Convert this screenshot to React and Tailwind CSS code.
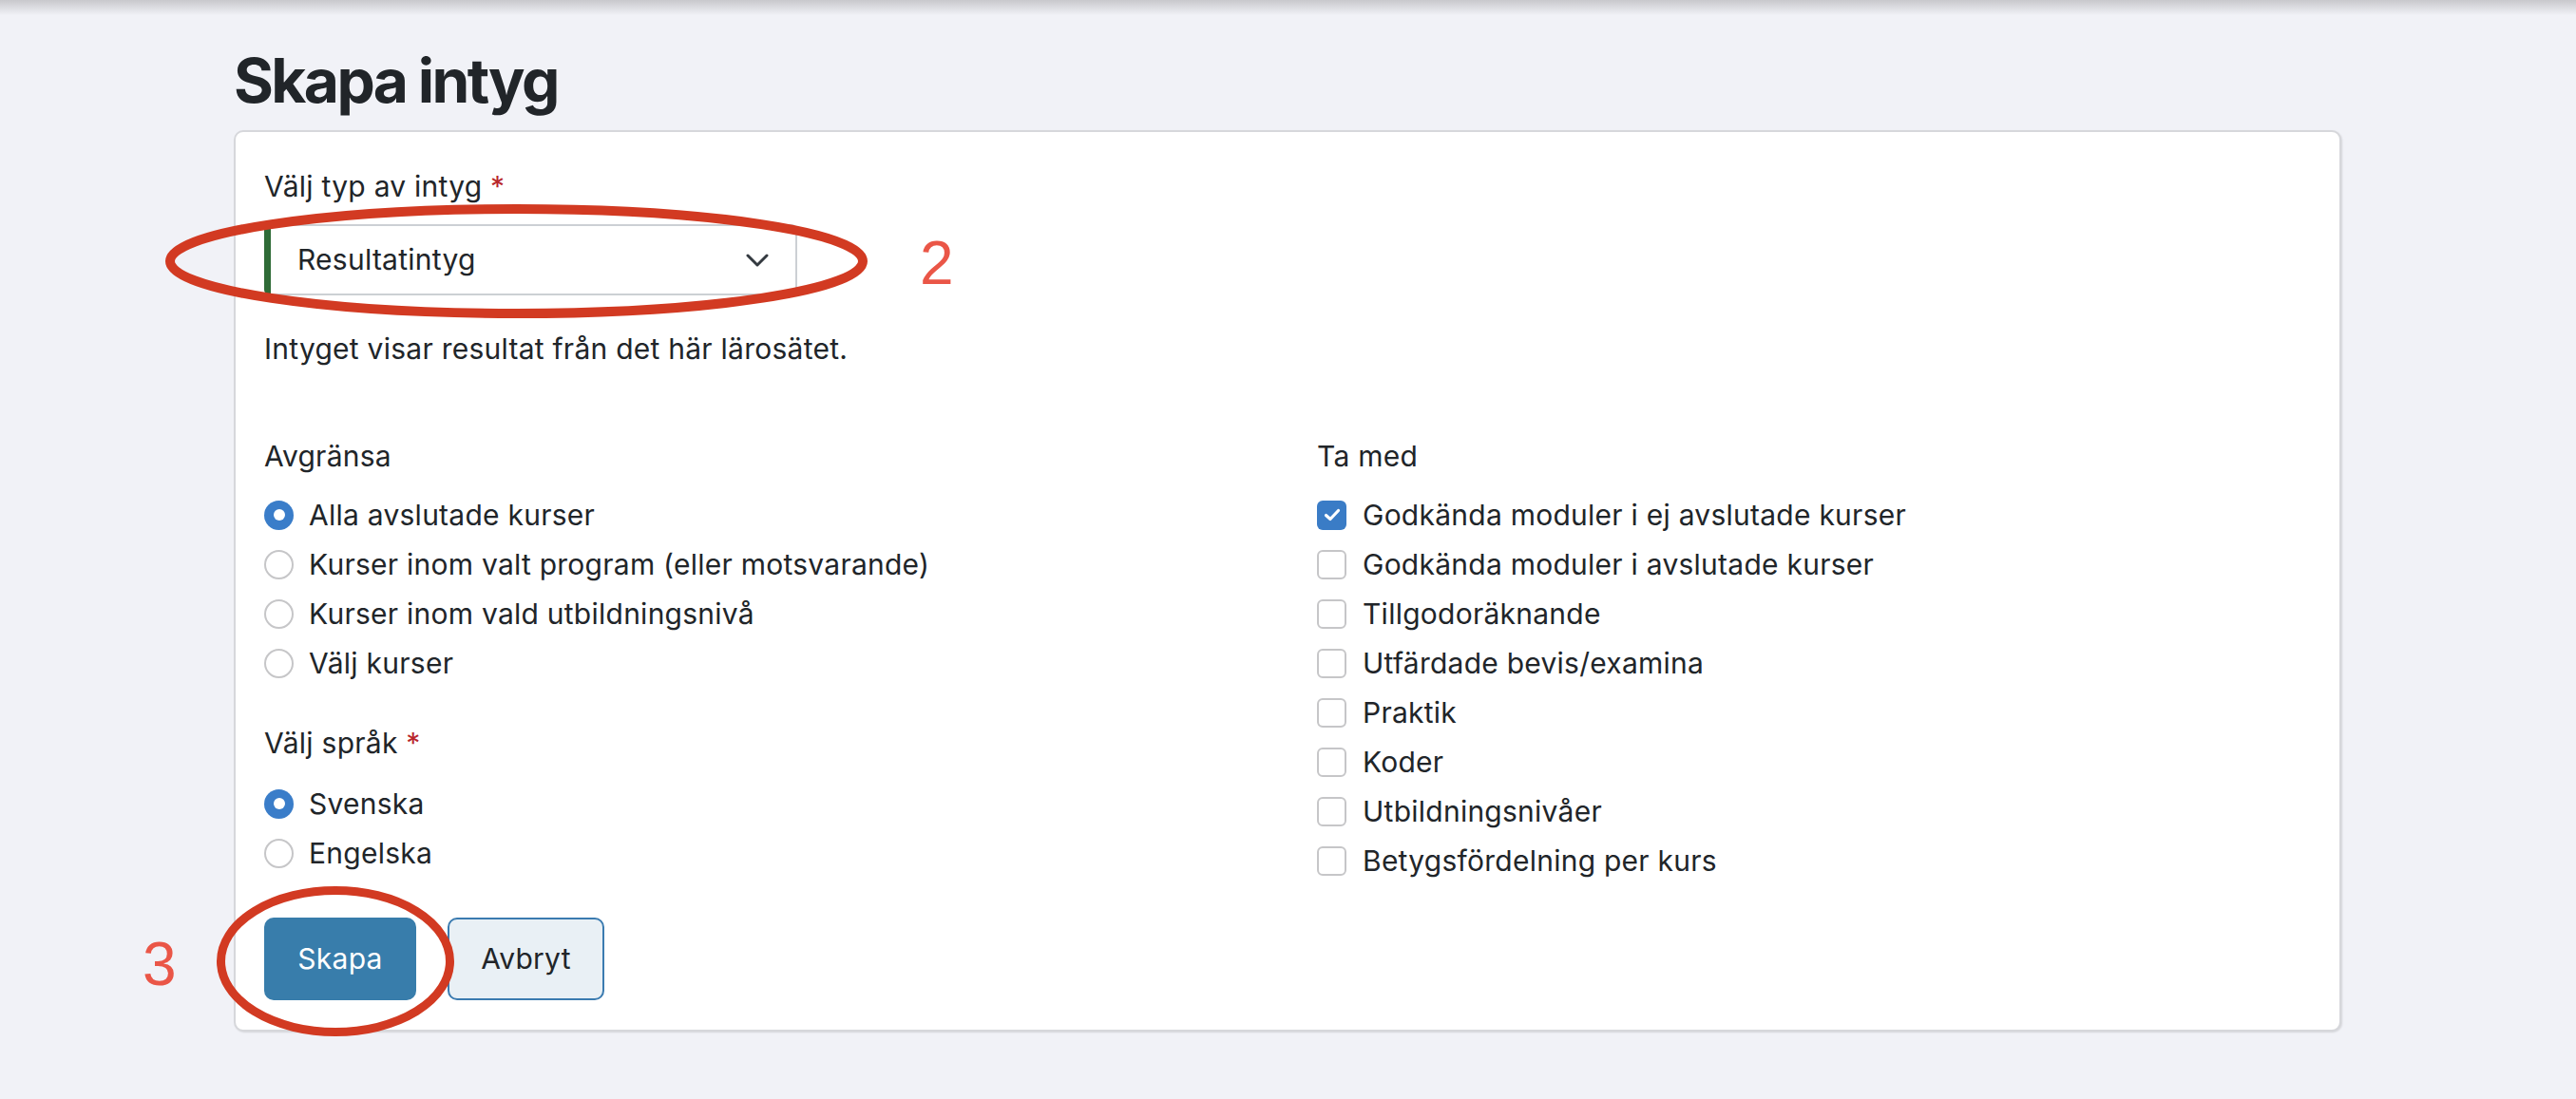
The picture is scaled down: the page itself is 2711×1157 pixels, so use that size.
import React from "react";

function Radio({ checked, label }) {
  return (
    <div className="flex h-[52px] items-center gap-[16px]">
      {checked ? (
        <span className="flex h-[31px] w-[31px] shrink-0 items-center justify-center rounded-full bg-[#3a7dc9]">
          <span className="h-[12px] w-[12px] rounded-full bg-white" />
        </span>
      ) : (
        <span className="h-[31px] w-[31px] shrink-0 rounded-full border-2 border-[#c6c6c8] bg-white" />
      )}
      <span>{label}</span>
    </div>
  );
}

function Checkbox({ checked, label }) {
  return (
    <div className="flex h-[52px] items-center gap-[17px]">
      {checked ? (
        <span className="flex h-[31px] w-[31px] shrink-0 items-center justify-center rounded-[6px] bg-[#3a7cc6]">
          <svg width="18" height="14" viewBox="0 0 18 14" fill="none">
            <path d="M2.5 7.5 L7 11.5 L15.5 2.5" stroke="white" strokeWidth="3.2" strokeLinecap="round" strokeLinejoin="round" />
          </svg>
        </span>
      ) : (
        <span className="h-[31px] w-[31px] shrink-0 rounded-[6px] border-2 border-[#c6c6c8] bg-white" />
      )}
      <span>{label}</span>
    </div>
  );
}

export default function App() {
  return (
    <div className="relative min-h-[1157px] w-full bg-[#f1f2f7] font-['Inter',sans-serif] text-[30px] leading-[45px] tracking-[0.25px] text-[#212529]">
      <div className="h-[16px] bg-linear-to-b from-[#c8c8cc] to-[#f1f2f7]" />
      <div className="ml-[246px] w-[2218px] pt-[37px]">
        <h1 className="text-[64px] font-bold leading-none tracking-[-2.6px] text-[#212529]">Skapa intyg</h1>
        <div className="mt-[20px] rounded-[10px] border-2 border-[#d6d7db] bg-white px-[30px] pb-[31px] pt-[35px] shadow-[1px_1px_2px_rgba(0,0,0,0.12)]">
          <div>
            Välj typ av intyg <span className="text-[#b8262b]">*</span>
          </div>
          <div className="mt-[17px] flex h-[75px] w-[561px] items-center justify-between rounded-[6px] border-2 border-l-[7px] border-[#ccd0d4] border-l-[#2f6b37] pl-[28px] pr-[28px]">
            <span>Resultatintyg</span>
            <svg width="24" height="14" viewBox="0 0 24 14" fill="none">
              <path d="M2 2 L12 12 L22 2" stroke="#343a40" strokeWidth="3" strokeLinecap="round" strokeLinejoin="round" />
            </svg>
          </div>
          <div className="mt-[34px]">Intyget visar resultat från det här lärosätet.</div>

          <div className="mt-[68px] grid grid-cols-[1108px_1fr]">
            <div>
              <div>Avgränsa</div>
              <div className="mt-[13px]">
                <Radio checked label="Alla avslutade kurser" />
                <Radio label="Kurser inom valt program (eller motsvarande)" />
                <Radio label="Kurser inom vald utbildningsnivå" />
                <Radio label="Välj kurser" />
              </div>
              <div className="mt-[36px]">
                Välj språk <span className="text-[#b8262b]">*</span>
              </div>
              <div className="mt-[15px]">
                <Radio checked label="Svenska" />
                <Radio label="Engelska" />
              </div>
            </div>
            <div>
              <div>Ta med</div>
              <div className="mt-[13px]">
                <Checkbox checked label="Godkända moduler i ej avslutade kurser" />
                <Checkbox label="Godkända moduler i avslutade kurser" />
                <Checkbox label="Tillgodoräknande" />
                <Checkbox label="Utfärdade bevis/examina" />
                <Checkbox label="Praktik" />
                <Checkbox label="Koder" />
                <Checkbox label="Utbildningsnivåer" />
                <Checkbox label="Betygsfördelning per kurs" />
              </div>
            </div>
          </div>

          <div className="mt-[34px] flex gap-[33px]">
            <button className="h-[87px] w-[160px] rounded-[10px] bg-[#387dab] text-white">Skapa</button>
            <button className="h-[87px] w-[165px] rounded-[10px] border-2 border-[#3b7bb0] bg-[#e9f0f5] text-[#212529]">Avbryt</button>
          </div>
        </div>
      </div>

      <svg className="pointer-events-none absolute left-0 top-0" width="2711" height="1157" viewBox="0 0 2711 1157" fill="none">
        <ellipse cx="543.5" cy="275" rx="364.5" ry="55" stroke="#d23a22" strokeWidth="10" />
        <ellipse cx="353" cy="1012" rx="120.5" ry="74.5" stroke="#d23a22" strokeWidth="9" />
      </svg>
      <div className="pointer-events-none absolute left-[968px] top-[245px] font-['Liberation_Sans',sans-serif] text-[64px] leading-none text-[#ea5647]">2</div>
      <div className="pointer-events-none absolute left-[150px] top-[983px] font-['Liberation_Sans',sans-serif] text-[64px] leading-none text-[#ea5647]">3</div>
    </div>
  );
}
